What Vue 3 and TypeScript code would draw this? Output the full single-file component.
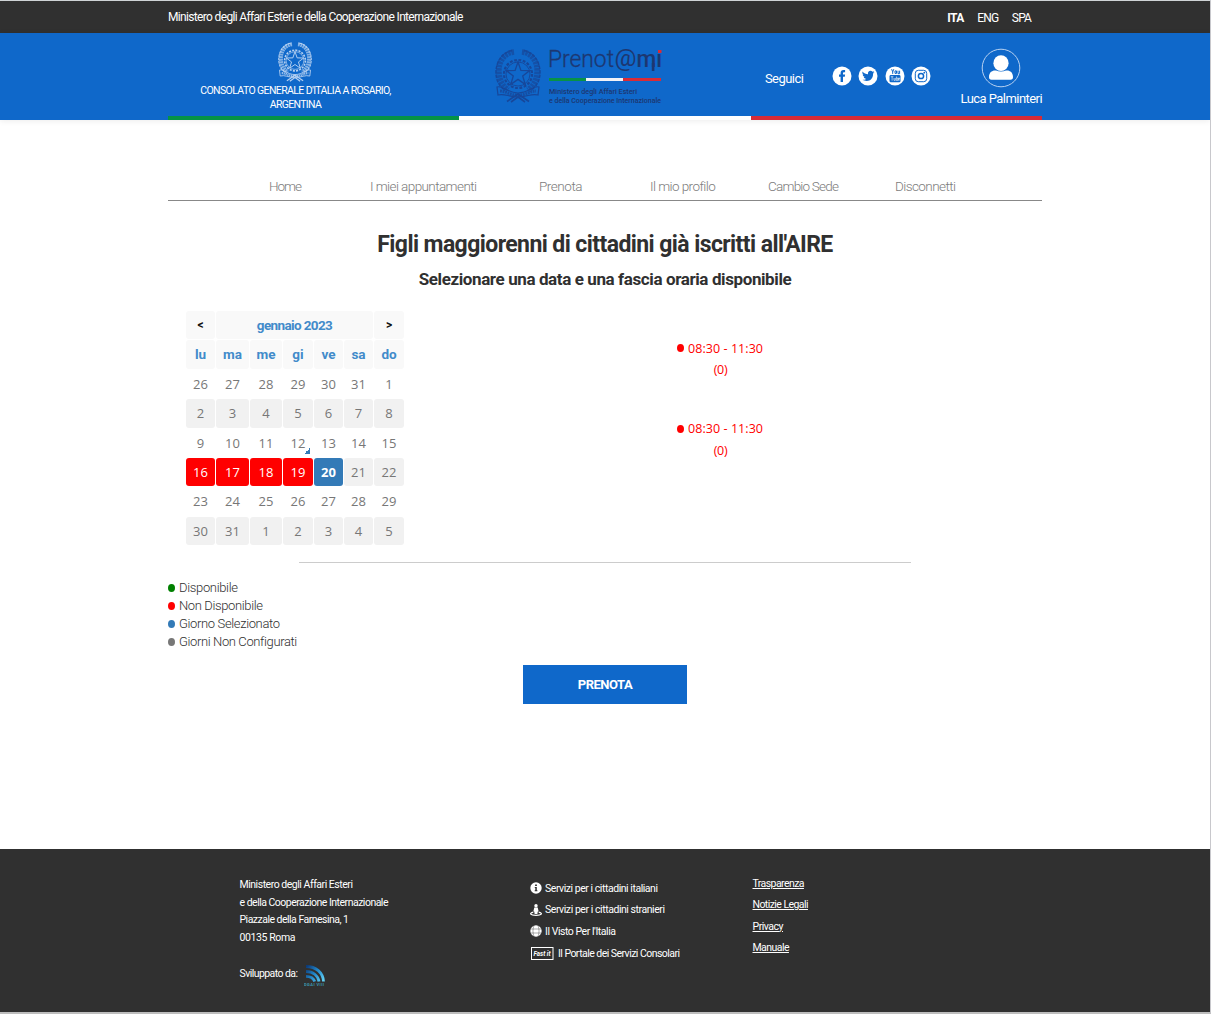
<script setup lang="ts">
import type { Directive } from 'vue'

// Tracks a single line of text so that it fills the given width in pixels.
const vFit: Directive<HTMLElement, number> = {
  mounted(el, { value }) {
    const count = (el.textContent ?? '').trim().length
    const natural = el.getBoundingClientRect().width
    el.style.letterSpacing = `${(value - natural) / (count - 1)}px`
  },
}

const languages = [
  { label: 'ITA', width: 17, active: true },
  { label: 'ENG', width: 22, active: false },
  { label: 'SPA', width: 20, active: false },
]

const menu = [
  { label: 'Home', width: 33 },
  { label: 'I miei appuntamenti', width: 107 },
  { label: 'Prenota', width: 43.5 },
  { label: 'Il mio profilo', width: 65.5 },
  { label: 'Cambio Sede', width: 71 },
  { label: 'Disconnetti', width: 61 },
]

const weekdays = ['lu', 'ma', 'me', 'gi', 've', 'sa', 'do']
const numbers = [
  26, 27, 28, 29, 30, 31, 1, 2, 3, 4, 5, 6, 7, 8, 9, 10, 11, 12, 13, 14, 15,
  16, 17, 18, 19, 20, 21, 22, 23, 24, 25, 26, 27, 28, 29, 30, 31, 1, 2, 3, 4, 5,
]
const days = numbers.map((value, index) => ({
  value,
  classes: {
    striped: Math.floor(index / 7) % 2 === 1,
    busy: index >= 21 && index <= 24,
    selected: index === 25,
    today: index === 17,
  },
}))

const slots = [{ time: '08:30 - 11:30', seats: '(0)' }, { time: '08:30 - 11:30', seats: '(0)' }]

const legend = [
  { label: 'Disponibile', kind: 'free', width: 59 },
  { label: 'Non Disponibile', kind: 'full', width: 84 },
  { label: 'Giorno Selezionato', kind: 'chosen', width: 101 },
  { label: 'Giorni Non Configurati', kind: 'unset', width: 118 },
]

const address = [
  { label: 'Ministero degli Affari Esteri', width: 113.5 },
  { label: 'e della Cooperazione Internazionale', width: 149 },
  { label: 'Piazzale della Farnesina, 1', width: 109.5 },
  { label: '00135 Roma', width: 56 },
]

const services = [
  { label: 'Servizi per i cittadini italiani', icon: 'info', width: 113 },
  { label: 'Servizi per i cittadini stranieri', icon: 'person', width: 120 },
  { label: "Il Visto Per l'Italia", icon: 'globe', width: 71 },
  { label: 'Il Portale dei Servizi Consolari', icon: 'fast', width: 122 },
]

const links = [
  { label: 'Trasparenza', width: 52 },
  { label: 'Notizie Legali', width: 56 },
  { label: 'Privacy', width: 31 },
  { label: 'Manuale', width: 37 },
]
</script>

<template>
  <div class="page">
    <svg class="symbols" width="0" height="0">
      <symbol id="emblem" viewBox="0 0 46 54">
        <g fill="none" stroke="currentColor">
          <circle cx="23" cy="25" r="14" stroke-width="2.200" stroke-dasharray="2.800 1.600" />
          <circle cx="23" cy="25" r="12" stroke-width=".9" />
          <path d="M23 13l2.900 8.400 8.800.200-7 5.300 2.500 8.500-7.200-5-7.200 5 2.500-8.500-7-5.300 8.800-.200z" stroke-width="1.300" />
          <path d="M19 3C9 4 3 13 4 24c.5 8 4 13 9 17M27 3c10 1 16 10 15 21-.5 8-4 13-9 17" stroke-width="5.500" stroke-dasharray="2.600 .8" opacity=".7" />
          <path d="M17 1.500C6 4 .5 14 1 25c.5 8 4 13 9 16M29 1.500c11 2.500 16.500 12.500 16 23.500-.5 8-4 13-9 16" stroke-width="1.400" stroke-dasharray="3.500 1" />
          <path d="M2 38c6-2 10 6 21 6s15-8 21-6l-1 8c-6-2-11 2-20 2s-14-4-20-2z" stroke-width="1.200" />
          <path d="M5 42c6 0 9 4 18 4s12-4 18-4" stroke-width="3" stroke-dasharray="1.800 .8" opacity=".8" />
          <path d="M12 52.500l11-7.500 11 7.500M16 53l7-5 7 5" stroke-width="1.600" />
        </g>
      </symbol>
    </svg>

    <div class="topbar">
      <div class="container topbar-row">
        <span v-fit="295.5" class="text">Ministero degli Affari Esteri e della Cooperazione Internazionale</span>
        <div class="languages">
          <span v-for="l in languages" :key="l.label" v-fit="l.width" class="text" :class="{ active: l.active }">{{ l.label }}</span>
        </div>
      </div>
    </div>

    <header class="header">
      <div class="container header-row">
        <div class="office">
          <svg class="office-emblem"><use href="#emblem" /></svg>
          <span v-fit="191" class="text">CONSOLATO GENERALE D'ITALIA A ROSARIO,</span>
          <span v-fit="52" class="text">ARGENTINA</span>
        </div>

        <div class="brand">
          <svg width="170" height="60" viewBox="0 0 170 60">
            <g color="#17479a"><use href="#emblem" x="1" y="4" width="46" height="54" /></g>
            <g fill="#1d3771">
              <text x="54" y="22" font-size="23" font-weight="300" stroke="#1d3771" stroke-width=".3" textLength="66" lengthAdjust="spacingAndGlyphs">Prenot</text>
              <text x="120.500" y="21" font-size="24" font-weight="400" textLength="22" lengthAdjust="spacingAndGlyphs">@</text>
              <text x="142.500" y="22" font-size="23" font-weight="500" textLength="25.500" lengthAdjust="spacingAndGlyphs">mi</text>
              <path d="M157.800 18h2.600v8h-2.600z" />
              <text x="55" y="48.500" font-size="7" font-weight="500" textLength="88" lengthAdjust="spacingAndGlyphs">Ministero degli Affari Esteri</text>
              <text x="55" y="57.500" font-size="7" font-weight="500" textLength="112" lengthAdjust="spacingAndGlyphs">e della Cooperazione Internazionale</text>
            </g>
            <path d="M162 3h6v4.500h-6z" fill="#0f68ca" />
            <path d="M164 5h3.500v3H164z" fill="#d92b36" />
            <path d="M55 33h37v3H55z" fill="#079247" />
            <path d="M92 33h37v3H92z" fill="#f1f2f7" />
            <path d="M129 33h38v3h-38z" fill="#d92b36" />
          </svg>
        </div>

        <div class="account">
          <div class="follow"><span v-fit="39" class="text">Seguici</span></div>
          <div class="social">
            <svg viewBox="0 0 20 20"><circle cx="10" cy="10" r="9.500" /><path class="cut" d="M8.600 16v-5.300H7V8.500h1.600V7c0-2 1-3 2.900-3h1.600v2.200h-1.200c-.6 0-.9.300-.9.900v1.400h2.100l-.3 2.200H11V16z" /></svg>
            <svg viewBox="0 0 20 20"><circle cx="10" cy="10" r="9.500" /><path class="cut" d="M4.500 5.500c1.500 1.800 3.300 2.700 5.500 2.800-.4-2 .8-3.500 2.500-3.500.8 0 1.500.3 2 .9l1.600-.6-1 1.400 1.300-.3-1.300 1.300c.1 4.800-2.800 7.500-6.300 7.500-1.700 0-3-.5-4.200-1.200 1.400.1 2.600-.2 3.500-.9-1.200-.1-2-.8-2.300-1.800h1C5.500 10.700 4.700 9.800 4.700 8.600l1 .3C4.500 8 4.100 7.100 4.500 5.500z" /></svg>
            <svg viewBox="0 0 20 20"><circle cx="10" cy="10" r="9.500" /><rect class="cut" x="4.500" y="9" width="11" height="7.300" rx="1.400" /><path class="line" d="M6.600 3.200l1.100 2.600 1.100-2.600M7.700 5.700v2.200M10 4.900v2.500h1.500V4.900zM13 4.700v3h1.600v-3" /><path class="fine" d="M5.800 10.700h2.600M7.100 10.700v4M9 12v2.400h1.300V12M11.400 10.500v4h1.300V12h-1.200M14.600 14.300h-1.100V12h1.100v1.200h-1" /></svg>
            <svg viewBox="0 0 20 20"><circle cx="10" cy="10" r="9.500" /><rect class="line" x="4.300" y="4.300" width="11.400" height="11.400" rx="3" /><circle class="line thick" cx="10" cy="10" r="2.600" /><circle class="cut" cx="13.300" cy="6.700" r=".9" /></svg>
          </div>
          <div class="user">
            <svg class="avatar" viewBox="0 0 40 40"><circle cx="20" cy="20" r="18.800" /><ellipse class="solid" cx="20" cy="15.200" rx="7.600" ry="7.900" /><path class="solid" d="M8 29c0-5 3.500-7 7-6.500 3 1.300 7 1.300 10 0 3.500-.5 7 1.500 7 6.500 0 1.800-.8 2.800-2.500 2.800h-19C8.800 31.800 8 30.800 8 29z" /></svg>
            <span v-fit="82" class="text">Luca Palminteri</span>
          </div>
        </div>
      </div>
      <div class="container flag"><i class="green" /><i class="white" /><i class="red" /></div>
    </header>

    <main class="container main">
      <nav class="menu">
        <a v-for="m in menu" :key="m.label"><span v-fit="m.width" class="text">{{ m.label }}</span></a>
      </nav>

      <h1><span v-fit="456" class="text">Figli maggiorenni di cittadini già iscritti all'AIRE</span></h1>
      <h2><span v-fit="373" class="text">Selezionare una data e una fascia oraria disponibile</span></h2>

      <div class="booking">
        <div class="calendar">
          <div class="head arrow">&lt;</div>
          <div class="head month"><span v-fit="76" class="text">gennaio 2023</span></div>
          <div class="head arrow">&gt;</div>
          <div v-for="w in weekdays" :key="w" class="head">{{ w }}</div>
          <div v-for="(d, i) in days" :key="i" class="day" :class="d.classes">{{ d.value }}</div>
        </div>
        <div class="slots">
          <div v-for="(s, i) in slots" :key="i" class="slot">
            <div class="slot-time"><i class="dot full" /><span v-fit="75" class="text">{{ s.time }}</span></div>
            <div><span v-fit="14" class="text">{{ s.seats }}</span></div>
          </div>
        </div>
      </div>

      <div class="rule" />

      <ul class="legend">
        <li v-for="l in legend" :key="l.label"><i class="dot" :class="l.kind" /><span v-fit="l.width" class="text">{{ l.label }}</span></li>
      </ul>

      <button class="submit" type="button"><span v-fit="55" class="text">PRENOTA</span></button>
    </main>

    <footer class="footer">
      <div class="address">
        <div v-for="a in address" :key="a.label"><span v-fit="a.width" class="text">{{ a.label }}</span></div>
        <div class="developer">
          <span v-fit="58.5" class="text">Sviluppato da:</span>
          <svg width="21" height="21" viewBox="0 0 21 21">
            <defs><linearGradient id="wave" gradientUnits="userSpaceOnUse" x1="2" y1="2" x2="19" y2="16"><stop offset="0" stop-color="#0b3a78" /><stop offset=".5" stop-color="#2389cc" /><stop offset="1" stop-color="#62d0f4" /></linearGradient></defs>
            <g fill="none" stroke="url(#wave)" stroke-width="2.800"><path d="M2 1.500c10 0 17 6 17.500 15" /><path d="M2 6.500c7 0 12 4 13 10" /><path d="M2 11.300c4.500 0 7.500 1.700 8.700 5.200" /></g>
            <text x="0" y="20.500" font-size="4" font-weight="700" fill="#3c9ab5" textLength="20">DGAI VIII</text>
          </svg>
        </div>
      </div>

      <ul class="services">
        <li v-for="s in services" :key="s.label">
          <svg v-if="s.icon === 'info'" class="icon" viewBox="0 0 12 12"><circle cx="6" cy="6" r="5.700" fill="#fff" /><path d="M5.100 2.500h1.800V4H5.100zM4.800 5h2v3.300h.6v1H4.700v-1h.6V6h-.5z" fill="#303030" /></svg>
          <svg v-else-if="s.icon === 'person'" class="icon" viewBox="0 0 12 12"><circle cx="6" cy="1.800" r="1.700" fill="#fff" /><path d="M4.300 3.600h3.400l.9 3.600-.9.500-.3 2.300H4.600l-.3-2.300-.9-.5z" fill="#fff" /><path d="M3.300 8.200C-1.500 9.300.5 11.300 6 11.300s7.500-2 2.700-3.100" fill="none" stroke="#fff" stroke-width="1.200" /></svg>
          <svg v-else-if="s.icon === 'globe'" class="icon" viewBox="0 0 12 12"><circle cx="6" cy="6" r="5.700" fill="#fff" /><path d="M.5 4h11M.5 8h11M4 .5c-1.400 3.500-1.400 7.500 0 11M8 .5c1.400 3.500 1.400 7.500 0 11" fill="none" stroke="#303030" stroke-width=".4" /></svg>
          <svg v-else class="fast" viewBox="0 0 23 13"><rect x=".5" y=".5" width="21.500" height="12" fill="none" stroke="#fff" /><text x="2.500" y="9.300" font-size="7" font-style="italic" font-weight="700" fill="#fff" textLength="17" lengthAdjust="spacingAndGlyphs">Fast it</text></svg>
          <span v-fit="s.width" class="text">{{ s.label }}</span>
        </li>
      </ul>

      <ul class="links">
        <li v-for="l in links" :key="l.label"><a v-fit="l.width" class="text">{{ l.label }}</a></li>
      </ul>
    </footer>
  </div>
</template>

<style>
body { background: #fff; }
</style>

<style scoped>
* { box-sizing: border-box; }
.page {
  display: flex;
  flex-direction: column;
  width: 1211px;
  height: 1014px;
  border-top: 1px solid #cfd3d6;
  border-right: 1px solid #c8c8cc;
  border-bottom: 2px solid #bdbdbd;
  font-family: Roboto, "Open Sans", sans-serif;
  font-size: 13px;
  color: #303030;
  overflow: hidden;
}
.symbols { position: absolute; }
.container { width: 874px; margin-left: 168px; }
.text { display: inline-block; white-space: nowrap; }
ul { list-style: none; margin: 0; padding: 0; }

.topbar { height: 32px; background: #303030; color: #fff; font-size: 12px; line-height: 32px; }
.topbar-row { display: flex; justify-content: space-between; }
.languages { display: flex; gap: 13.500px; padding-right: 11px; line-height: 34px; height: 32px; }
.languages .active { font-weight: 700; }

.header { height: 87px; background: #0f68ca; color: #fff; box-shadow: 0 1px 6px rgba(0, 0, 0, .08); }
.header-row { display: flex; height: 83px; }
.office { width: 255px; display: flex; flex-direction: column; align-items: center; padding-top: 9px; font-size: 10.500px; line-height: 14px; }
.office-emblem { width: 34px; height: 40px; margin-bottom: 2px; color: #b7d1f1; }
.brand { width: 240px; padding: 12px 0 0 71px; }
.brand svg { display: block; overflow: visible; }
.account { display: flex; flex: 1; padding-left: 102px; }
.follow { margin-top: 37px; line-height: 17px; }
.social { display: flex; gap: 6.400px; margin: 33px 0 0 28.500px; }
.social svg { width: 20px; height: 20px; fill: #fff; }
.social .cut { fill: #0f68ca; }
.social .line { fill: none; stroke: #0f68ca; stroke-width: 1; }
.social .thick { stroke-width: 1.500; }
.social .fine { fill: none; stroke: #fff; stroke-width: .6; }
.user { display: flex; flex-direction: column; align-items: center; margin: 15px 0 0 29.500px; line-height: 21px; }
.avatar { width: 40px; height: 40px; fill: none; stroke: #b7d1f1; stroke-width: 1; }
.avatar .solid { fill: #fff; stroke: none; }
.flag { display: flex; height: 4px; }
.flag i { flex: 1; }
.green { background: #059346; }
.white { background: #fff; }
.red { background: #d72b36; }

.menu { display: grid; grid-template-columns: 101px 169px 111px 118px 127px 61px; height: 81px; padding: 56px 0 0 101px; border-bottom: 1px solid #888; color: #7c7c7c; font-size: 13.500px; font-weight: 300; line-height: 20px; }
h1 { margin: 28px 0 0; font-size: 23px; line-height: 32px; text-align: center; }
h2 { margin: 7px 0 0; font-size: 17px; font-weight: 700; line-height: 22px; text-align: center; }

.booking { display: flex; height: 272px; padding: 21px 0 0 18px; }
.calendar { display: grid; grid-template-columns: 29px 33px 32px 30px 29px 29px 30px; grid-auto-rows: 28.400px; gap: 1px; align-content: start; width: 218px; font-size: 13.500px; line-height: 29px; text-align: center; color: #777; }
.head { background: #f9f9f9; border-radius: 3px; color: #428bca; font-weight: 700; }
.month { grid-column: span 5; }
.arrow { color: #111; font-size: 12px; }
.day { border-radius: 3px; font-family: "Open Sans", sans-serif; font-size: 13px; }
.striped { background: #f1f1f1; }
.busy { background: #f00; color: #fff; font-weight: 500; }
.selected { background: #337ab7; color: #fff; font-weight: 700; }
.today { background: linear-gradient(135deg, transparent 50%, #337ab7 50%) 21px 19px / 6px 6px no-repeat; }
.slots { width: 87px; margin: 26.500px 0 0 273px; color: #f00; font-weight: 400; font-family: "Open Sans", sans-serif; font-size: 12.500px; line-height: 21.500px; text-align: center; }
.slot { height: 80.500px; }
.slot-time { display: flex; align-items: center; gap: 4px; }
.dot { display: block; flex: none; width: 7px; height: 8px; border-radius: 50%; }
.full { background: #f00; }
.free { background: #008000; }
.chosen { background: #337ab7; }
.unset { background: #777; }

.rule { width: 612px; height: 1px; margin: 0 auto; background: #ccc; }
.legend { margin-top: 16px; font-size: 13px; font-weight: 300; line-height: 18px; }
.legend li { display: flex; align-items: center; gap: 4px; }
.submit { display: block; width: 164px; height: 39px; margin: 14px 0 0 355px; padding: 0; border: 0; background: #0f68ca; color: #fff; font: 700 13px/40px Roboto, sans-serif; }

.footer { display: flex; height: 163px; margin-top: auto; flex-shrink: 0; background: #303030; color: #fff; font-size: 10.500px; }
.address { width: 290.500px; margin-left: 239.500px; padding-top: 27px; line-height: 17.700px; }
.developer { display: flex; gap: 7px; margin-top: 18px; }
.services { width: 222.500px; padding-top: 28.500px; }
.services li { display: flex; align-items: center; height: 21.600px; }
.icon { width: 12px; height: 12px; margin-right: 3px; }
.fast { width: 23px; height: 13px; margin: 1px 4px 0 1px; }
.links { padding-top: 24px; line-height: 21.400px; }
.links .text { text-decoration: underline; text-underline-offset: 1px; }
</style>
